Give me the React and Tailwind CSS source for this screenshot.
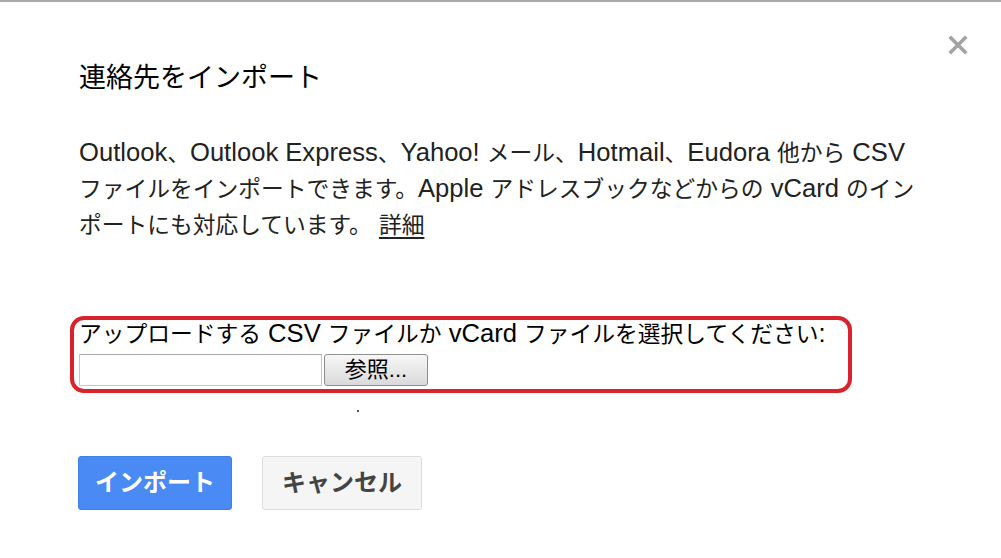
function J({ children }) {
  return <span className="text-[22.75px]">{children}</span>;
}

export default function App() {
  const font = { fontFamily: '"Liberation Sans", "Noto Sans CJK JP", sans-serif' };
  return (
    <div className="relative w-[1001px] h-[558px] bg-white border-t-2 border-[#a9a9a9] overflow-hidden text-[#222]" style={font}>
      <div className="absolute right-[33px] top-[33px] w-[20px] h-[20px]">
        <svg width="20" height="20" viewBox="0 0 20 20">
          <path d="M3 3 L17 17 M17 3 L3 17" stroke="#a3a3a3" strokeWidth="3.6" strokeLinecap="square" />
        </svg>
      </div>
      <div className="pl-[79px] pt-[58px]">
        <div className="text-[27px] leading-[36px] text-black">連絡先をインポート</div>
        <div className="mt-[38px] w-[880px] text-[25.6px] leading-[36px]">
          <div className="h-[36px] whitespace-nowrap">Outlook<J>、</J>Outlook Express<J>、</J>Yahoo! <J>メール、</J>Hotmail<J>、</J>Eudora <J>他から</J> CSV</div>
          <div className="h-[36px] whitespace-nowrap"><J>ファイルをインポートできます。</J>Apple <J>アドレスブックなどからの</J> vCard <J>のイン</J></div>
          <div className="h-[36px] whitespace-nowrap"><J>ポートにも対応しています。</J> <span className="underline underline-offset-4"><J>詳細</J></span></div>
        </div>
        <div className="mt-[74px] ml-[-9px] w-[782px] h-[77px] border-4 border-[#d8232c] rounded-[14px] pl-[5px]">
          <div className="h-[30px] mt-[-2px] text-[25.6px] leading-[30px] whitespace-nowrap text-black"><J>アップロードする</J> CSV <J>ファイルか</J> vCard <J>ファイルを選択してください</J>:</div>
          <div className="flex items-center gap-[2px] mt-[6px]">
            <div className="w-[243px] h-[32px] border border-[#c6c6c6] border-t-[#a8a8a8] bg-white"></div>
            <div className="w-[104px] h-[32px] flex items-center justify-center rounded-[3px] border border-[#8e8e8e] bg-gradient-to-b from-[#f7f7f7] to-[#dadada] text-[22px] text-black leading-none">参照...</div>
          </div>
        </div>
        <div className="ml-[278px] mt-[17px] w-[2px] h-[2px] bg-[#555]"></div>
        <div className="mt-[44px] flex gap-[30px]">
          <div className="ml-[-1px] w-[154px] h-[54px] rounded-[3px] bg-[#4a8af4] border border-[#3f7fe8] flex items-center justify-center text-white text-[24px] font-bold">インポート</div>
          <div className="w-[160px] h-[54px] rounded-[3px] bg-[#f5f5f5] border border-[#dcdcdc] flex items-center justify-center text-[#444] text-[24px] font-bold">キャンセル</div>
        </div>
      </div>
    </div>
  );
}
